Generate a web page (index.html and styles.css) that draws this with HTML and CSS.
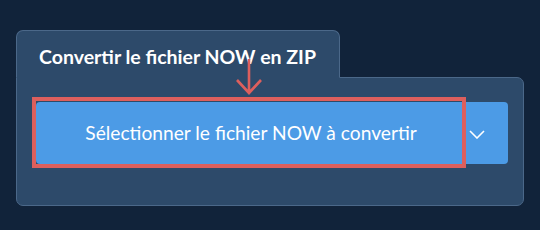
FILE: index.html
```html
<!DOCTYPE html>
<html>
<head>
<meta charset="utf-8">
<link rel="stylesheet" href="styles.css">
</head>
<body>

<div class="converter">
    <div class="tab">Convertir le fichier NOW en ZIP</div>
    <div class="panel">
        <div class="picker">
            <button class="picker-main">Sélectionner le fichier NOW à convertir</button>
            <button class="picker-toggle">
                <svg width="16" height="9" viewBox="0 0 16 9">
                    <path d="M1 1 L8 8 L15 1" fill="none" stroke="#ffffff" stroke-width="1.6"/>
                </svg>
            </button>
            <!-- highlight overlay -->
            <div class="highlight"></div>
        </div>
    </div>
    <svg class="pointer" width="30" height="38" viewBox="0 0 30 38">
        <path d="M15 0 L15 34 M3 21 L15 34 L27 21" fill="none" stroke="#dd5f5d" stroke-width="2.6"/>
    </svg>
</div>

</body>
</html>
```

FILE: styles.css
```css
body {
    margin: 0;
    background-color: #11233a;
    font-family: Lato, "Liberation Sans", sans-serif;
}

.converter {
    position: relative;
    padding: 30px 16px 25px 16px;
}

.tab {
    display: inline-block;
    position: relative;
    z-index: 1;
    margin-bottom: -1px;
    padding: 14px 22px 0 22px;
    height: 32px;
    width: 278px;
    background: #2d4a6a;
    border: 1px solid #4b6889;
    border-bottom: 1px solid #2d4a6a;
    border-radius: 7px 7px 0 0;
    color: #ffffff;
    font-size: 19.5px;
    font-weight: bold;
    line-height: 24px;
    white-space: nowrap;
}

.panel {
    background: #2d4a6a;
    border: 1px solid #4b6889;
    border-radius: 0 7px 7px 7px;
    padding: 24px 15px 41px 19px;
}

.picker {
    position: relative;
    display: flex;
    height: 62px;
}

.picker button {
    border: none;
    margin: 0;
    background: #4c9be6;
    color: #ffffff;
    font-family: Lato, "Liberation Sans", sans-serif;
    cursor: pointer;
}

.picker-main {
    flex: 1;
    font-size: 19.2px;
    border-radius: 4px 0 0 4px;
    padding: 0 0 2px 0;
}

.picker-toggle {
    width: 42px;
    border-radius: 0 4px 4px 0;
    padding: 2px 0 0 0;
    display: flex;
    align-items: center;
    justify-content: flex-start;
}

.picker-toggle svg {
    margin-left: 3px;
}

.highlight {
    position: absolute;
    left: -4px;
    top: -5px;
    width: 426px;
    height: 63px;
    border: 4px solid #dd5f5d;
    pointer-events: none;
}

.pointer {
    position: absolute;
    z-index: 2;
    left: 234px;
    top: 59px;
}
```
